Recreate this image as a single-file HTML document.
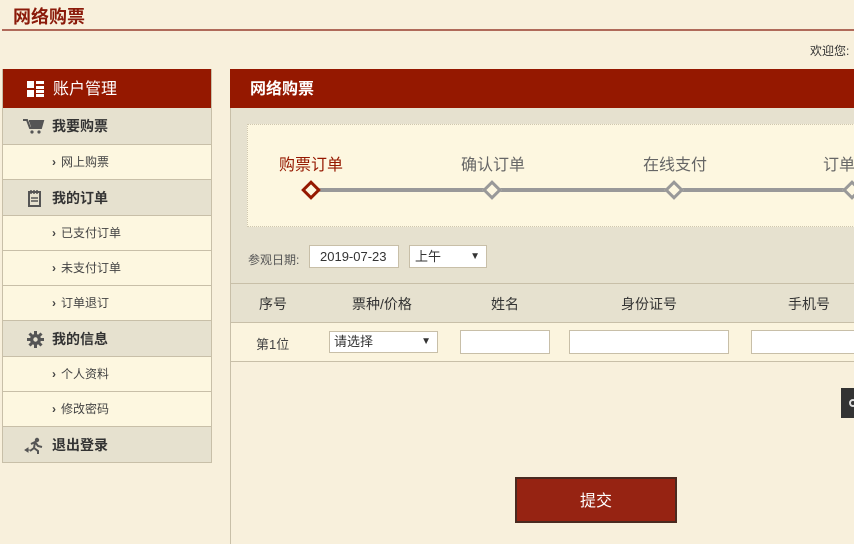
<!DOCTYPE html>
<html><head><meta charset="utf-8"><style>
*{margin:0;padding:0;box-sizing:border-box}
body{width:854px;height:544px;overflow:hidden;background:#f8f0dc;font-family:"Liberation Sans","Noto Sans CJK SC",sans-serif;position:relative;color:#333}
.a{position:absolute;white-space:nowrap}
.side{left:2px;top:69px;width:210px;border:1px solid #c8bfa8;border-top:none}
.sh{height:39px;background:#951800;color:#fff;font-size:16px;line-height:41px;padding-left:50px;position:relative}
.grp{height:36px;background:#e6e1cf;border-top:1px solid #c8bfa8;font-size:14px;font-weight:bold;line-height:36px;padding-left:49px;position:relative;color:#333}
.it{height:35px;background:#fdf7e0;border-top:1px solid #c8bfa8;font-size:12px;line-height:35px;padding-left:49px;color:#444}
.it:before{content:"›";margin-right:5px;font-weight:bold}
.ic{position:absolute;left:20px;top:10px}
.step{font-size:16px;color:#666;top:151px}
.dm{width:14px;height:14px;border:3px solid #999;background:#fdf7e0;transform:rotate(45deg);top:183px}
.th{font-size:14px;color:#333;top:294px}
.inp{background:#fff;border:1px solid #c8bfa8;height:23px}
</style></head><body>
<div class="a" style="left:13px;top:3px;font-size:18px;font-weight:bold;color:#8b1a0a">网络购票</div>
<div class="a" style="left:2px;top:29px;width:852px;height:2px;background:#b06a5a"></div>
<div class="a" style="left:810px;top:42px;font-size:12px;color:#333">欢迎您:</div>

<div class="a side">
<div class="sh"><svg class="ic" style="left:24px;top:12px" width="17" height="16"><rect x="0" y="0" width="7" height="7" fill="#fff"/><rect x="0" y="9" width="7" height="7" fill="#fff"/><rect x="9" y="0" width="8" height="3" fill="#fff"/><rect x="9" y="5" width="8" height="3" fill="#fff"/><rect x="9" y="9" width="8" height="3" fill="#fff"/><rect x="9" y="13" width="8" height="3" fill="#fff"/></svg>账户管理</div>
<div class="grp" style="border-top:none"><svg class="ic" width="22" height="16"><path d="M0 2h4l3 8h11l2-7H6" fill="none" stroke="#555" stroke-width="2"/><path d="M6 3h14l-2 6H8z" fill="#555"/><circle cx="9" cy="14" r="1.6" fill="#555"/><circle cx="16" cy="14" r="1.6" fill="#555"/></svg>我要购票</div>
<div class="it">网上购票</div>
<div class="grp"><svg class="ic" style="left:25px" width="13" height="17"><rect x="1" y="2" width="11" height="14" fill="none" stroke="#555" stroke-width="2"/><path d="M3 0v4M6 0v4M9 0v4M3 8h7M3 11h7" stroke="#555" stroke-width="1.5"/></svg>我的订单</div>
<div class="it">已支付订单</div>
<div class="it">未支付订单</div>
<div class="it">订单退订</div>
<div class="grp"><svg class="ic" style="left:24px" width="17" height="17" viewBox="0 0 17 17"><circle cx="8.5" cy="8.5" r="5.5" fill="#555"/><g stroke="#555" stroke-width="3"><path d="M8.5 0v17M0 8.5h17M2.5 2.5l12 12M14.5 2.5l-12 12"/></g><circle cx="8.5" cy="8.5" r="2.2" fill="#e6e1cf"/></svg>我的信息</div>
<div class="it">个人资料</div>
<div class="it">修改密码</div>
<div class="grp"><svg class="ic" style="left:21px" width="22" height="17"><circle cx="13" cy="3" r="2.2" fill="#555"/><path d="M7 7l4-2 3 4 4 1M11 5l-1 6 4 3v3M10 11l-4 3" fill="none" stroke="#555" stroke-width="2"/><path d="M1 13l3-2v4z M1 13h6" fill="#555" stroke="#555"/></svg>退出登录</div>
</div>

<div class="a" style="left:230px;top:69px;width:624px;height:39px;background:#951800;color:#fff;font-size:16px;font-weight:bold;line-height:42px;padding-left:20px">网络购票</div>
<div class="a" style="left:230px;top:108px;width:624px;height:214px;background:#e6e1cf;border-left:1px solid #c8bfa8"></div>
<div class="a" style="left:230px;top:322px;width:1px;height:222px;background:#c8bfa8"></div>
<div class="a" style="left:247px;top:124px;width:610px;height:103px;background:#fdf7e0;border:1px dotted #cfc7b0"></div>
<div class="a" style="left:312px;top:188px;width:542px;height:4px;background:#999"></div>
<div class="a step" style="left:279px;color:#951800">购票订单</div>
<div class="a step" style="left:461px">确认订单</div>
<div class="a step" style="left:643px">在线支付</div>
<div class="a step" style="left:823px">订单</div>
<div class="a dm" style="left:304px;border-color:#951800"></div>
<div class="a dm" style="left:485px"></div>
<div class="a dm" style="left:667px"></div>
<div class="a dm" style="left:845px"></div>

<div class="a" style="left:248px;top:251px;font-size:12px;color:#555">参观日期:</div>
<div class="a inp" style="left:309px;top:245px;width:90px;font-size:13px;line-height:21px;padding-left:10px">2019-07-23</div>
<div class="a inp" style="left:409px;top:245px;width:78px;font-size:13px;line-height:21px;padding-left:5px">上午<span style="position:absolute;right:6px;font-size:10px">▼</span></div>

<div class="a" style="left:231px;top:283px;width:623px;height:1px;background:#c8bfa8"></div>
<div class="a th" style="left:259px">序号</div>
<div class="a th" style="left:352px">票种/价格</div>
<div class="a th" style="left:491px">姓名</div>
<div class="a th" style="left:621px">身份证号</div>
<div class="a th" style="left:788px">手机号</div>
<div class="a" style="left:231px;top:322px;width:623px;height:40px;background:#fbf4de;border-top:1px solid #c8bfa8;border-bottom:1px solid #c8bfa8"></div>
<div class="a" style="left:256px;top:334px;font-size:13px;color:#444">第1位</div>
<div class="a inp" style="left:329px;top:331px;width:109px;height:22px;font-size:13px;line-height:20px;padding-left:4px">请选择<span style="position:absolute;right:6px;font-size:10px">▼</span></div>
<div class="a inp" style="left:460px;top:330px;width:90px;height:24px"></div>
<div class="a inp" style="left:569px;top:330px;width:160px;height:24px"></div>
<div class="a inp" style="left:751px;top:330px;width:110px;height:24px"></div>

<div class="a" style="left:841px;top:388px;width:13px;height:30px;background:#333"><div style="position:absolute;left:8px;top:11px;width:8px;height:8px;border:2px solid #ddd;border-radius:50%"></div></div>
<div class="a" style="left:515px;top:477px;width:162px;height:46px;background:#962312;border:2px solid #4a2a20;color:#fff;font-size:16px;text-align:center;line-height:46px">提交</div>
</body></html>
